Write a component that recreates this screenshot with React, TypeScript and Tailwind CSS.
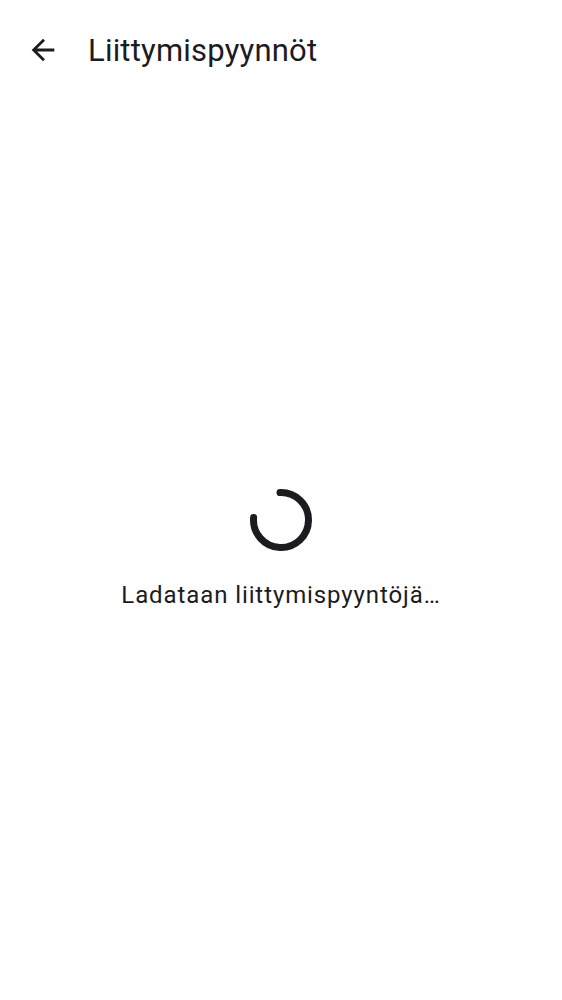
import React from 'react';

const ArrowBack: React.FC = () => (
  <svg viewBox="0 0 24 24" className="w-[34px] h-[34px]" fill="#1c1b1f">
    <path d="M20 11H7.83l5.59-5.59L12 4l-8 8 8 8 1.41-1.41L7.83 13H20v-2z" />
  </svg>
);

const Spinner: React.FC = () => (
  <svg viewBox="0 0 64 64" className="w-[64px] h-[64px]">
    <path
      d="M 31 4.5 A 27.5 27.5 0 1 1 4.6 29.6"
      fill="none"
      stroke="#1c1b1f"
      strokeWidth="7"
      strokeLinecap="round"
    />
  </svg>
);

export default function App() {
  return (
    <div className="min-h-screen bg-white text-[#1c1b1f] flex flex-col font-['Roboto',sans-serif]">
      <div className="h-[100px] flex items-center pl-[26px]">
        <button type="button" className="mr-[28px]">
          <ArrowBack />
        </button>
        <h1 className="text-[31px] leading-none tracking-[0.2px]">Liittymispyynnöt</h1>
      </div>
      <div className="flex-1 flex flex-col items-center pt-[388px]">
        <Spinner />
        <p className="mt-[25px] text-[24px] tracking-[0.9px]">Ladataan liittymispyyntöjä…</p>
      </div>
    </div>
  );
}
